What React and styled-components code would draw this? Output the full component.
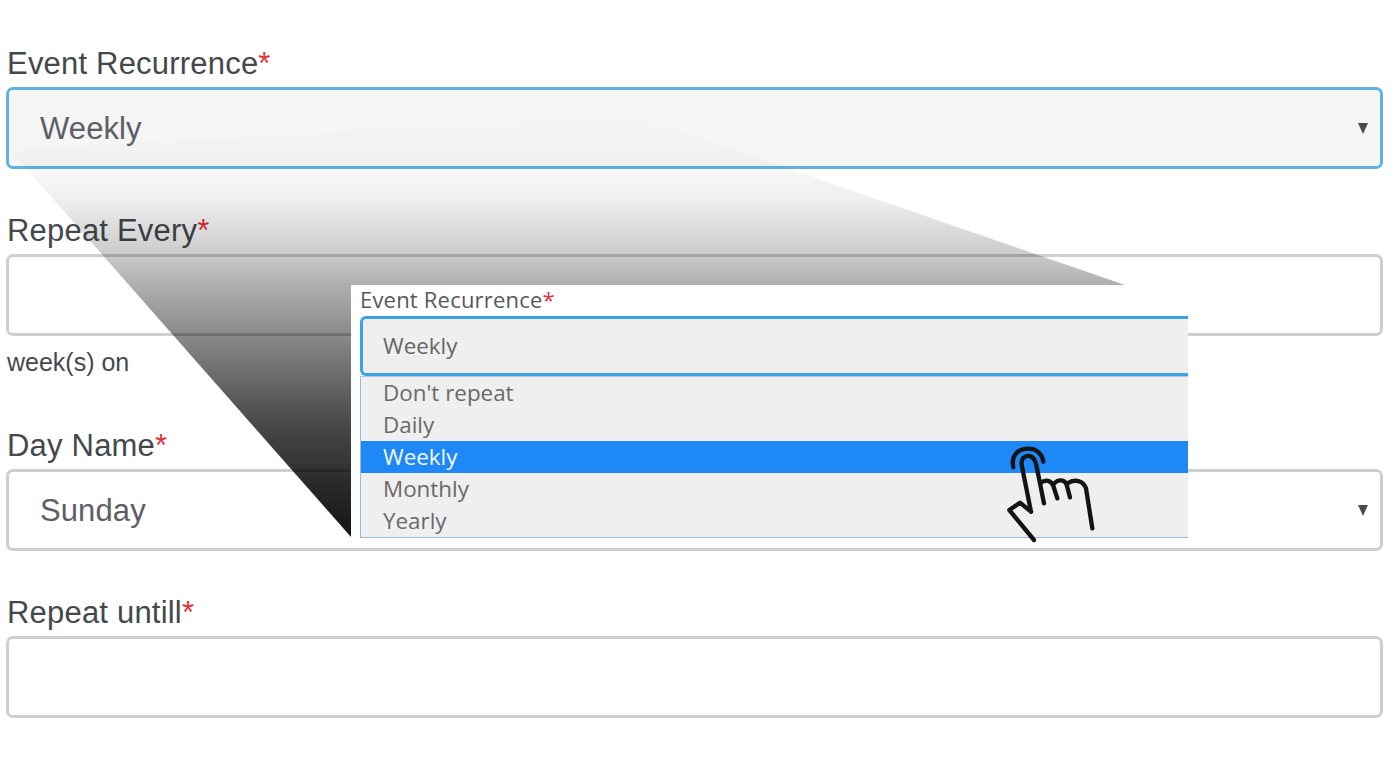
import React from "react";
import styled, { createGlobalStyle } from "styled-components";

const Global = createGlobalStyle`
  html, body { margin: 0; padding: 0; background: #fff; }
  #root { width: 1398px; height: 769px; overflow: hidden; }
`;

const Page = styled.main`
  position: relative;
  width: 1398px;
  height: 769px;
  padding: 46px 15px 0 6px;
  box-sizing: border-box;
  font-family: "Liberation Sans", Arial, sans-serif;
  background: #fff;
`;

const Field = styled.section`
  margin-bottom: 44px;
`;

const Label = styled.label`
  display: block;
  height: 34px;
  margin-bottom: 7px;
  padding-left: 1px;
  font-size: 31px;
  line-height: 36px;
  letter-spacing: 0.2px;
  color: #44484c;
`;

const Star = styled.span`
  color: #e5303a;
`;

const Box = styled.div`
  display: flex;
  align-items: center;
  justify-content: space-between;
  height: 82px;
  box-sizing: border-box;
  padding: 2px 12px 0 31px;
  border: 3px solid ${(p) => (p.$focused ? "#5fb2e2" : "#cfcfcf")};
  border-radius: 7px;
  background: ${(p) => (p.$focused ? "#f5f5f5" : "#fff")};
  font-size: 31px;
  letter-spacing: 0.1px;
  color: #5c6066;
`;

const Arrow = styled.span`
  width: 0;
  height: 0;
  margin-top: -2px;
  border-left: 5.5px solid transparent;
  border-right: 5.5px solid transparent;
  border-top: 11px solid #4a4a4a;
`;

const Helper = styled.div`
  padding: 12px 0 8px 1px;
  height: 28px;
  font-size: 25px;
  line-height: 28px;
  color: #44484c;
`;

const Wedge = styled.svg`
  position: absolute;
  left: 0;
  top: 0;
  pointer-events: none;
`;

const Popup = styled.aside`
  position: absolute;
  left: 351px;
  top: 285px;
  width: 837px;
  height: 253px;
  padding-left: 9px;
  box-sizing: border-box;
  background: #fff;
  font-family: "Open Sans", sans-serif;
`;

const PopupLabel = styled.div`
  height: 31px;
  font-size: 22px;
  line-height: 29px;
  letter-spacing: 0.2px;
  color: #55595c;
`;

const PopupBox = styled.div`
  display: flex;
  align-items: center;
  height: 60px;
  box-sizing: border-box;
  padding: 0 0 2px 20px;
  border: 3px solid #3ba3e4;
  border-right: none;
  border-radius: 6px 0 0 6px;
  background: #efefef;
  font-size: 22.4px;
  color: #666;
`;

const PopupList = styled.ul`
  margin: 0;
  padding: 0;
  height: 162px;
  box-sizing: border-box;
  list-style: none;
  border: 1.5px solid #9db7df;
  border-top-color: #b5c6e0;
  border-right: none;
  background: #efefef;
`;

const Option = styled.li`
  height: 32px;
  padding-left: 22px;
  font-size: 22.4px;
  line-height: 31px;
  color: ${(p) => (p.$active ? "#f4f9ff" : "#696969")};
  background: ${(p) => (p.$active ? "#1d88f6" : "transparent")};
`;

const Hand = styled.svg`
  position: absolute;
  left: 609px;
  top: 135px;
  overflow: visible;
`;

const Req = () => <Star>*</Star>;

const options = ["Don't repeat", "Daily", "Weekly", "Monthly", "Yearly"];

export default function App() {
  return (
    <Page>
      <Global />
      <Field>
        <Label>Event Recurrence<Req /></Label>
        <Box $focused>Weekly<Arrow /></Box>
      </Field>
      <Field>
        <Label>Repeat Every<Req /></Label>
        <Box />
        <Helper>week(s) on</Helper>
      </Field>
      <Field>
        <Label>Day Name<Req /></Label>
        <Box>Sunday<Arrow /></Box>
      </Field>
      <Field>
        <Label>Repeat untill<Req /></Label>
        <Box />
      </Field>

      <Wedge width="1398" height="769" viewBox="0 0 1398 769">
        <defs>
          <linearGradient id="fade" gradientUnits="userSpaceOnUse" x1="0" y1="112" x2="0" y2="537">
            <stop offset="0" stopColor="#000" stopOpacity="0" />
            <stop offset="0.1" stopColor="#000" stopOpacity="0.015" />
            <stop offset="0.2" stopColor="#000" stopOpacity="0.06" />
            <stop offset="0.33" stopColor="#000" stopOpacity="0.2" />
            <stop offset="0.41" stopColor="#000" stopOpacity="0.32" />
            <stop offset="0.54" stopColor="#000" stopOpacity="0.48" />
            <stop offset="0.72" stopColor="#000" stopOpacity="0.7" />
            <stop offset="0.88" stopColor="#000" stopOpacity="0.84" />
            <stop offset="1" stopColor="#000" stopOpacity="0.92" />
          </linearGradient>
        </defs>
        <polygon points="10,150 633,115 1125,285 1125,537 351,537" fill="url(#fade)" />
      </Wedge>

      <Popup>
        <PopupLabel>Event Recurrence<Req /></PopupLabel>
        <PopupBox>Weekly</PopupBox>
        <PopupList>
          {options.map((o) => (
            <Option key={o} $active={o === "Weekly"}>{o}</Option>
          ))}
        </PopupList>
        <Hand width="240" height="140" viewBox="0 0 720 420" fill="none" stroke="#141414" strokeWidth="13" strokeLinecap="round" strokeLinejoin="round">
          <path d="M160 142C152 105 175 86 205 86C230 86 247 103 250 125" />
          <path d="M213 275L186 140C180 115 195 106 208 108C220 110 226 122 229 135L252 250" />
          <path d="M213 275L180 248L148 270L222 360" />
          <path d="M243 188C255 178 274 180 280 198L292 235" />
          <path d="M283 190C295 176 316 178 321 198L330 232" />
          <path d="M323 190C343 176 370 182 378 205L397 325" />
        </Hand>
      </Popup>
    </Page>
  );
}
